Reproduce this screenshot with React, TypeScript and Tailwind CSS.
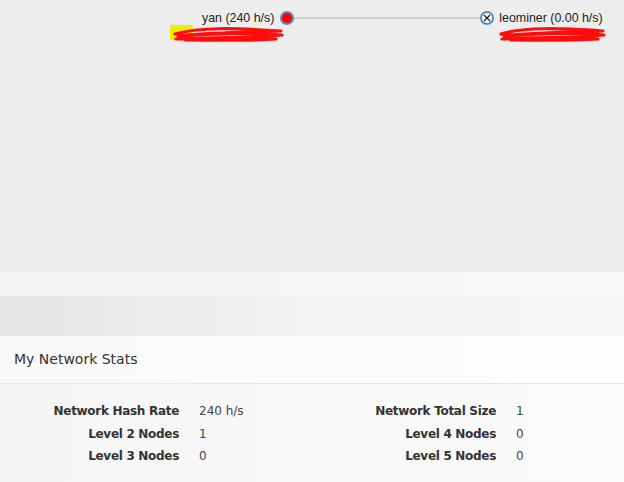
import React from 'react';

const stats = [
    ['Network Hash Rate', '240 h/s', 'Network Total Size', '1'],
    ['Level 2 Nodes', '1', 'Level 4 Nodes', '0'],
    ['Level 3 Nodes', '0', 'Level 5 Nodes', '0'],
];

// messy red redaction marks over the node addresses
const Scribble: React.FC<{ className: string; width: number }> = ({ className, width }) => {
    const w = width;
    const d = [
        `M3 8 C ${w * 0.25} 1, ${w * 0.55} 2, ${w - 3} 5`,
        `C ${w * 0.7} 7, ${w * 0.35} 6, 6 10`,
        `C ${w * 0.3} 8, ${w * 0.7} 6, ${w - 2} 9`,
        `C ${w * 0.65} 12, ${w * 0.3} 12, 4 13`,
        `C ${w * 0.35} 11, ${w * 0.75} 11, ${w - 8} 13`,
        `C ${w * 0.6} 15, ${w * 0.3} 14, ${w * 0.12} 14`,
    ].join(' ');
    return (
        <svg className={className} width={w} height={20} viewBox={`0 0 ${w} 20`}>
            <path d={d} fill="none" stroke="#ff0c0c" strokeWidth={3.2} strokeLinejoin="round" strokeLinecap="round" />
        </svg>
    );
};

export default function App() {
    return (
        <div className="w-[624px] h-[482px] overflow-hidden bg-[#f7f7f7] text-[#222]" style={{ fontFamily: '"Liberation Sans", Arial, sans-serif' }}>
            {/* hash tree canvas */}
            <div className="relative h-[272px] bg-[#ededed]">
                <div className="absolute left-[202px] top-[11px] flex items-center text-[12.4px] leading-[14px]">
                    <span>yan (240 h/s)</span>
                    <span className="ml-[6px] w-[14px] h-[14px] rounded-full bg-[#ff0000] border-2 border-[#5c88b3]" />
                    <span className="w-[186px] h-[2px] bg-[#d0d0d0]" />
                    <span className="w-[14px] h-[14px] rounded-full bg-white border-2 border-[#5c88b3] flex items-center justify-center">
                        <svg width="8" height="8" viewBox="0 0 8 8">
                            <path d="M1 1 L7 7 M7 1 L1 7" stroke="#222" strokeWidth="1.3" />
                        </svg>
                    </span>
                    <span className="ml-[5px]">leominer (0.00 h/s)</span>
                </div>
                <div className="absolute left-[170px] top-[25px] w-[23px] h-[15px] bg-[#f0ec00]" />
                <Scribble className="absolute left-[172px] top-[26px]" width={112} />
                <Scribble className="absolute left-[498px] top-[26px]" width={108} />
            </div>
            <div className="h-[24px] bg-gradient-to-r from-[#f3f3f3] to-[#f9f9f9]" />
            <div className="h-[40px] bg-gradient-to-r from-[#e5e5e5] via-[#f3f3f3] to-[#f7f7f7]" />
            <div style={{ fontFamily: '"DejaVu Sans", "Open Sans", sans-serif' }}>
                <div className="h-[48px] flex items-center px-[14px] bg-gradient-to-r from-[#f9f9f9] to-[#fefefe] border-b border-[#e6e6e6] text-[14px] text-[#333]">
                    My Network Stats
                </div>
                <div className="h-[100px] bg-gradient-to-r from-[#f5f5f5] to-[#fbfbfb] pt-[16px]">
                    <div className="grid grid-cols-[179px_117px_160px_1fr] gap-x-5 content-start text-[12px] leading-[22.5px]">
                        {stats.map(([l1, v1, l2, v2]) => (
                            <React.Fragment key={l1}>
                                <div className="text-right font-bold text-[#333] tracking-[-0.3px]">{l1}</div>
                                <div className="text-[#444]">{v1}</div>
                                <div className="text-right font-bold text-[#333] tracking-[-0.3px]">{l2}</div>
                                <div className="text-[#444]">{v2}</div>
                            </React.Fragment>
                        ))}
                    </div>
                </div>
            </div>
        </div>
    );
}
